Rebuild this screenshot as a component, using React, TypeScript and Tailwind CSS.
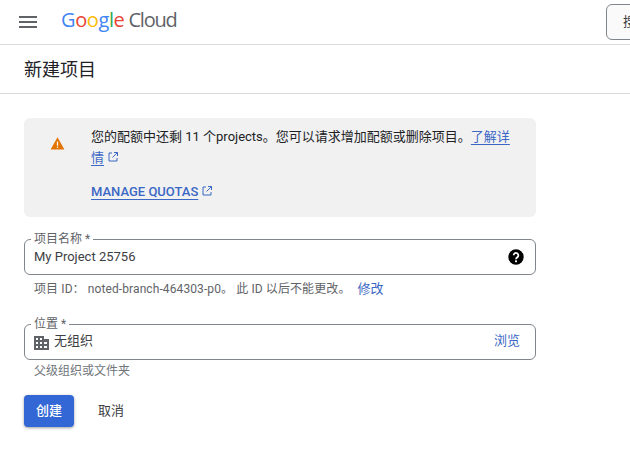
import React from "react";

const font = "font-['Roboto','Noto_Sans_CJK_SC',sans-serif]";

function ExternalIcon({ size = 12 }: { size?: number }) {
  return (
    <svg width={size} height={size} viewBox="0 0 24 24" fill="none" stroke="#3b68c4" strokeWidth="2" className="inline-block align-[-1px] ml-[3px]">
      <path d="M10 4H4v16h16v-6" />
      <path d="M14 3h7v7" />
      <path d="M21 3 11 13" />
    </svg>
  );
}

function Field({ label, children }: { label: string; children: React.ReactNode }) {
  return (
    <div className="relative h-[36px] rounded-[6px] border border-[#80868b] flex items-center pl-[9px] pr-[10px]">
      <span className="absolute left-[6px] top-[-9px] bg-white px-[3px] text-[12px] leading-[16px] text-[#5f6368]">{label}</span>
      {children}
    </div>
  );
}

export default function App() {
  return (
    <div className={`${font} w-[630px] h-[461px] overflow-hidden bg-white text-[#202124]`}>
      <header className="h-[45px] border-b border-[#dadce0] flex items-center overflow-hidden">
        <svg width="18" height="12" viewBox="0 0 18 12" className="ml-[19px] shrink-0" fill="#5f6368">
          <rect x="0" y="0" width="18" height="2" />
          <rect x="0" y="5" width="18" height="2" />
          <rect x="0" y="10" width="18" height="2" />
        </svg>
        <div className="ml-[24px] mb-[4px] w-[117px] shrink-0 flex items-baseline text-[20px] leading-none tracking-[-0.4px] font-['Open_Sans',sans-serif]">
          <span className="text-[#4285f4]">G</span>
          <span className="text-[#ea4335]">o</span>
          <span className="text-[#fbbc04]">o</span>
          <span className="text-[#4285f4]">g</span>
          <span className="text-[#34a853]">l</span>
          <span className="text-[#ea4335]">e</span>
          <span className="text-[#5f6368] ml-[4px] tracking-[-1.2px]">Cloud</span>
        </div>
        <div className="w-[428px] shrink-0" />
        <button className="h-[36px] w-[80px] shrink-0 rounded-[6px] border border-[#80868b] bg-[#fafafa] pl-[16px] text-left text-[13px] text-[#3c4043]">
          搜索
        </button>
      </header>
      <div className="h-[49px] border-b border-[#dadce0] flex items-center pl-[24px] text-[18px] text-[#202124]">新建项目</div>

      <main className="ml-[24px] w-[512px] pt-[24px]">
        <section className="h-[99px] rounded-[6px] bg-[#f1f1f2] flex">
          <div className="w-[67px] shrink-0 flex justify-center pt-[18px]">
            <svg width="15" height="15" viewBox="0 0 24 24">
              <path d="M1 21.5 12 2l11 19.5z" fill="#e37400" />
              <rect x="11" y="9" width="2" height="6.5" fill="#fff" />
              <rect x="11" y="17" width="2" height="2" fill="#fff" />
            </svg>
          </div>
          <div className="w-[430px] pt-[8px] text-[13px] leading-[21px]">
            <p>
              您的配额中还剩 11 个projects。您可以请求增加配额或删除项目。
              <a className="text-[#3b68c4] underline underline-offset-[3px]">了解详情</a>
              <ExternalIcon />
            </p>
            <p className="mt-[13px] text-[13px] font-medium text-[#3b68c4]">
              <a className="underline underline-offset-[3px]">MANAGE QUOTAS</a>
              <ExternalIcon />
            </p>
          </div>
        </section>

        <div className="mt-[22px]">
          <Field label="项目名称 *">
            <span className="text-[13px] text-[#3c4043]">My Project 25756</span>
            <svg width="16" height="16" viewBox="0 0 24 24" className="ml-auto mr-[1px]">
              <circle cx="12" cy="12" r="11.5" fill="#000" />
              <path d="M8.5 9.5a3.5 3.5 0 1 1 5.6 2.8c-1.2.9-2.1 1.5-2.1 3" fill="none" stroke="#fff" strokeWidth="2.6" />
              <rect x="10.6" y="17" width="2.8" height="2.8" fill="#fff" />
            </svg>
          </Field>
          <p className="mt-[6px] pl-[10px] text-[12px] leading-[16px] tracking-[0.1px] text-[#5f6368]">
            项目 ID： noted-branch-464303-p0。 此 ID 以后不能更改。
            <a className="ml-[7px] text-[13px] text-[#3b68c4]">修改</a>
          </p>
        </div>

        <div className="mt-[27px]">
          <Field label="位置 *">
            <svg width="15" height="15" viewBox="0 0 15 15" className="shrink-0" fill="#5f6368">
              <path d="M0 1h10v3h5v11H0zM2 3v2h2V3zm4 0v2h2V3zM2 7v2h2V7zm4 0v2h2V7zm4 0v2h3V7zM2 11v2h2v-2zm4 0v2h2v-2zm4 0v2h3v-2z" fillRule="evenodd" />
            </svg>
            <span className="ml-[5px] mb-[2px] text-[13px] text-[#3c4043]">无组织</span>
            <a className="ml-auto mr-[5px] mb-[2px] text-[13px] text-[#3b68c4]">浏览</a>
          </Field>
          <p className="mt-[3px] pl-[10px] text-[12px] leading-[16px] text-[#70757a]">父级组织或文件夹</p>
        </div>

        <div className="mt-[16px] flex items-center">
          <button className="h-[32px] w-[50px] rounded-[4px] bg-[#3367d6] text-[13px] font-medium text-white shadow-[0_1px_3px_rgba(60,64,67,0.5)]">创建</button>
          <button className="ml-[24px] text-[13px] text-[#3c4043]">取消</button>
        </div>
      </main>
    </div>
  );
}
